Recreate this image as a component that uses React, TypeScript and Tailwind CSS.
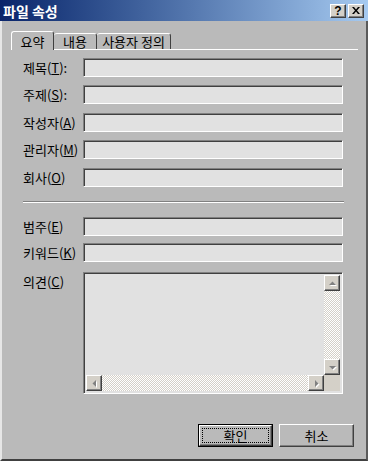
import React from "react";

const font = { fontFamily: '"Noto Sans CJK KR", "Noto Sans", sans-serif' };

const raised =
  "border border-t-white border-l-white border-r-[#404040] border-b-[#404040] shadow-[inset_-1px_-1px_#808080]";
const sunken =
  "border border-t-[#808080] border-l-[#808080] border-r-white border-b-white shadow-[inset_1px_1px_#404040]";
const dither =
  "bg-[repeating-conic-gradient(#ffffff_0_25%,#d4d0c8_0_50%)] bg-[length:2px_2px]";

function Arrow({ dir }: { dir: "up" | "down" | "left" | "right" }) {
  const pts = {
    up: "1,5 8,5 4.5,1.5",
    down: "1,2 8,2 4.5,5.5",
    left: "5,1 5,8 1.5,4.5",
    right: "2,1 2,8 5.5,4.5",
  }[dir];
  const box = dir === "up" || dir === "down" ? "0 0 9 7" : "0 0 7 9";
  const size = dir === "up" || dir === "down" ? "w-[9px] h-[7px]" : "w-[7px] h-[9px]";
  return (
    <svg viewBox={box} className={size}>
      <polygon points={pts} fill="#ffffff" transform="translate(1,1)" />
      <polygon points={pts} fill="#808080" />
    </svg>
  );
}

function ScrollBtn({ dir }: { dir: "up" | "down" | "left" | "right" }) {
  return (
    <div className={`w-[16px] h-[16px] bg-[#d4d0c8] flex items-center justify-center ${raised}`}>
      <Arrow dir={dir} />
    </div>
  );
}

function Field({ label, hot, rest, top }: { label: string; hot: string; rest?: string; top: string }) {
  return (
    <div className={`flex items-center ${top}`}>
      <div className="w-[60px] text-[13px] text-black leading-none">
        {label}(<u>{hot}</u>){rest}
      </div>
      <div className={`w-[260px] h-[19px] bg-[#e1e1e1] ${sunken}`} />
    </div>
  );
}

export default function App() {
  return (
    <div className="w-[368px] h-[461px] flex flex-col bg-[#bababa] select-none" style={font}>
      {/* Title bar */}
      <div className="h-[21px] shrink-0 flex items-center justify-between pl-[3px] pr-[4px] bg-gradient-to-r from-[#0a246a] to-[#a6caf0]">
        <span className="text-[14px] font-bold text-white leading-none">파일 속성</span>
        <div className="flex gap-[2px]">
          <div className={`w-[16px] h-[14px] bg-[#d4d0c8] flex items-center justify-center ${raised}`}>
            <span className="text-[12px] font-bold leading-none text-black" style={{ fontFamily: '"Liberation Sans", sans-serif' }}>?</span>
          </div>
          <div className={`w-[16px] h-[14px] bg-[#d4d0c8] flex items-center justify-center ${raised}`}>
            <svg viewBox="0 0 8 7" className="w-[8px] h-[7px]">
              <path d="M0 0 L2 0 L4 2.5 L6 0 L8 0 L5 3.5 L8 7 L6 7 L4 4.5 L2 7 L0 7 L3 3.5 Z" fill="#000" />
            </svg>
          </div>
        </div>
      </div>

      {/* Body */}
      <div className="flex-1 flex flex-col border-l-2 border-l-[#e6e6e6] border-r-2 border-r-[#5a5a5a] border-b-2 border-b-[#404040]">
        {/* Tabs */}
        <div className="mt-[10px] ml-[9px] h-[18px] flex items-end relative z-10">
          <div className="w-[43px] h-[19px] -mb-px bg-[#bababa] border-l border-t border-t-white border-l-white border-r border-r-[#404040] rounded-t-[3px] flex items-center justify-center text-[13px] leading-none">
            요약
          </div>
          <div className="w-[43px] h-[16px] border-t border-t-white border-r border-r-[#404040] rounded-t-[3px] flex items-center justify-center text-[13px] leading-none">
            내용
          </div>
          <div className="w-[74px] h-[16px] border-t border-t-white border-r border-r-[#404040] rounded-t-[3px] flex items-center justify-center text-[13px] leading-none">
            사용자 정의
          </div>
        </div>
        <div className="ml-[9px] w-[347px] h-px bg-white" />

        {/* Fields */}
        <div className="pl-[21px] flex flex-col">
          <Field label="제목" hot="T" rest=":" top="mt-[8px]" />
          <Field label="주제" hot="S" rest=":" top="mt-[8px]" />
          <Field label="작성자" hot="A" top="mt-[9px]" />
          <Field label="관리자" hot="M" top="mt-[8px]" />
          <Field label="회사" hot="O" top="mt-[9px]" />

          <div className="mt-[14px] w-[321px] h-px bg-[#808080]" />
          <div className="w-[321px] h-px bg-white" />

          <Field label="범주" hot="E" top="mt-[14px]" />
          <Field label="키워드" hot="K" top="mt-[7px]" />

          {/* Comments */}
          <div className="mt-[10px] flex items-start">
            <div className="w-[60px] pt-[3px] text-[13px] leading-none">
              의견(<u>C</u>)
            </div>
            <div className={`w-[260px] h-[122px] bg-[#e1e1e1] p-[2px] flex flex-col ${sunken}`}>
              <div className="flex-1 flex">
                <div className="flex-1" />
                <div className="w-[16px] flex flex-col">
                  <ScrollBtn dir="up" />
                  <div className={`flex-1 ${dither}`} />
                  <ScrollBtn dir="down" />
                </div>
              </div>
              <div className="h-[16px] flex">
                <ScrollBtn dir="left" />
                <div className={`flex-1 ${dither}`} />
                <ScrollBtn dir="right" />
                <div className="w-[16px] bg-[#d4d0c8]" />
              </div>
            </div>
          </div>
        </div>

        {/* Buttons */}
        <div className="mt-[30px] pr-[12px] flex justify-end gap-[6px]">
          <div className="w-[75px] h-[23px] border border-black">
            <div className={`w-full h-full flex items-center justify-center p-[2px] ${raised}`}>
              <div className="w-full h-full border border-dotted border-black flex items-center justify-center text-[13px] leading-none">
                확인
              </div>
            </div>
          </div>
          <div className={`w-[75px] h-[23px] flex items-center justify-center text-[13px] leading-none ${raised}`}>
            취소
          </div>
        </div>
      </div>
    </div>
  );
}
